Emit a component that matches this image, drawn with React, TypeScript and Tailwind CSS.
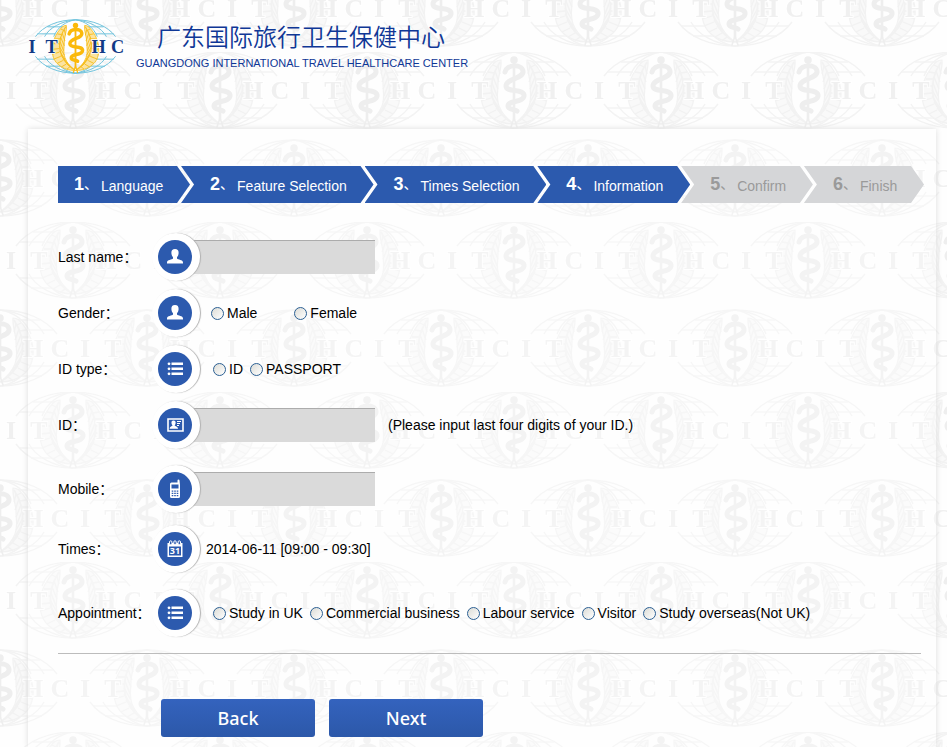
import clsx from 'clsx';
import React, { useState } from 'react';

interface EmblemProps {
    line: string,
    wreath: string,
    fill: string,
    snake: string,
    letter: string,
}

interface Step {
    number: number,
    label: string,
    done: boolean,
}

interface Choice {
    value: string,
    label: string,
}

interface RowProps {
    label: string,
    htmlFor?: string,
    icon: React.ReactNode,
    className?: string,
    children: React.ReactNode,
}

const steps: Step[] = [
    { number: 1, label: 'Language', done: true },
    { number: 2, label: 'Feature Selection', done: true },
    { number: 3, label: 'Times Selection', done: true },
    { number: 4, label: 'Information', done: true },
    { number: 5, label: 'Confirm', done: false },
    { number: 6, label: 'Finish', done: false },
];

const genders: Choice[] = [
    { value: 'male', label: 'Male' },
    { value: 'female', label: 'Female' },
];

const idTypes: Choice[] = [
    { value: 'id', label: 'ID' },
    { value: 'passport', label: 'PASSPORT' },
];

const appointments: Choice[] = [
    { value: 'study-uk', label: 'Study in UK' },
    { value: 'business', label: 'Commercial business' },
    { value: 'labour', label: 'Labour service' },
    { value: 'visitor', label: 'Visitor' },
    { value: 'study-other', label: 'Study overseas(Not UK)' },
];

// Globe, wreath and staff, centred on 0,0 and 136 x 78 units large
function Emblem({ line, wreath, fill, snake, letter }: EmblemProps) {
    return (
        <g>
            <g fill="none" stroke={line} strokeWidth="1.4">
                <path d="M-57 -14C-46 -29 -25 -38 0 -38S46 -29 57 -14M-57 14C-46 29 -25 38 0 38S46 29 57 14" />
                <path d="M-44 -14C-37 -27 -20 -36 0 -38C20 -36 37 -27 44 -14M-44 14C-37 27 -20 36 0 38C20 36 37 27 44 14" />
                <path d="M-31 -14C-26 -27 -14 -36 0 -38C14 -36 26 -27 31 -14M-31 14C-26 27 -14 36 0 38C14 36 26 27 31 14" />
                <path d="M-54 -18H-28M28 -18H54M-40 -28H-16M16 -28H40M-54 18H-28M28 18H54M-42 28H-12M12 28H42" />
            </g>
            {[1, -1].map((side) => (
                <g key={side} transform={`scale(${side} 1)`} stroke={wreath} fill="none">
                    <path
                        d="M13 -30C18 -30 20 -27 24 -22C30 -14 34 -3 33 8C32 16 30 21 24 26C17 32 9 34 0 34C7 29 12 24 15 16C18 8 16 2 16 -6C16 -14 12 -22 13 -30Z"
                        fill={fill}
                        strokeWidth="1.2"
                    />
                    <path d="M14 -28C27 -8 27 16 2 33" strokeWidth="1.5" />
                    <path
                        d="M16 -24L14 -16M19 -19L15 -8M21 -13L16 -1M22 -7L17 6M23 0L16 12M23 6L15 18M21 12L12 23M18 18L8 28M14 23L5 31"
                        strokeWidth="1.3"
                    />
                    <path
                        d="M17 -23L21 -25M20 -17L26 -18M22 -11L29 -11M23 -4L32 -4M23 3L33 4M23 8L33 11M21 14L31 18M18 20L26 24M13 25L20 29M8 29L12 32"
                        strokeWidth="1.3"
                    />
                </g>
            ))}
            <g fill="none" stroke={snake} strokeLinecap="round">
                <circle cx="0" cy="-30" r="3.8" fill={snake} stroke="none" />
                <path d="M0 -29V30" strokeWidth="2.6" />
                <path d="M-3 37L0 28L3 37" strokeWidth="1.6" />
                <path
                    d="M-9 -18C-7 -26 8 -26 9 -19C10 -11 -8 -12 -8 -4C-8 3 11 -2 10 6C9 13 -6 10 -6 16C-6 20 0 19 3 21"
                    strokeWidth="5"
                />
            </g>
            <g
                fill={letter}
                stroke="#fff"
                strokeWidth="2"
                paintOrder="stroke"
                textAnchor="middle"
                fontSize="26"
                fontWeight="bold"
                fontFamily="'Liberation Serif', serif"
            >
                <text x="-62" y="9">I</text>
                <text x="-34" y="9">T</text>
                <text x="33" y="9">H</text>
                <text x="60" y="9">C</text>
            </g>
        </g>
    );
}

function Watermark() {
    const pale = { line: '#f3f3f3', wreath: '#f2f2f2', fill: '#f9f9f9', snake: '#eeeeee', letter: '#f0f0f0' };
    return (
        <svg className="absolute inset-0 -z-10 h-full w-full" aria-hidden="true">
            <defs>
                <pattern id="watermark" width="147" height="170" y="52" patternUnits="userSpaceOnUse">
                    <g transform="translate(73 38)"><Emblem {...pale} /></g>
                    <g transform="translate(0 126)"><Emblem {...pale} /></g>
                    <g transform="translate(147 126)"><Emblem {...pale} /></g>
                </pattern>
            </defs>
            <rect width="100%" height="100%" fill="url(#watermark)" />
        </svg>
    );
}

function PersonIcon() {
    return (
        <svg viewBox="0 0 18 18" className="size-[18px]" fill="#fff" aria-hidden="true">
            <path d="M9 1C11.600 1 12.800 2.600 12.600 5.200C12.500 7.200 11.700 8.400 11 9.200V10.500C11.800 11.800 17 11.600 17 14.500V15.500H1V14.500C1 11.600 6.200 11.800 7 10.500V9.200C6.300 8.400 5.500 7.200 5.400 5.200C5.200 2.600 6.400 1 9 1Z" />
        </svg>
    );
}

function ListIcon() {
    return (
        <svg viewBox="0 0 18 18" className="size-[18px]" fill="#fff" aria-hidden="true">
            <path d="M5.500 2.500h11.500v2.600h-11.500zM5.500 7.500h11.500v2.600h-11.500zM5.500 12.500h11.500v2.600h-11.500z" />
            <circle cx="3" cy="3.800" r="1.400" />
            <circle cx="3" cy="8.800" r="1.400" />
            <circle cx="3" cy="13.800" r="1.400" />
        </svg>
    );
}

function CardIcon() {
    return (
        <svg viewBox="0 0 18 18" className="size-[18px]" aria-hidden="true">
            <path d="M2 3H17V15H2Z" fill="none" stroke="#fff" strokeWidth="1.600" />
            <path d="M7.500 4.600C9.200 4.600 9.800 5.700 9.600 7.200C9.500 8.200 9 8.800 8.700 9.300C9 10.500 12 10.400 12 12.700H3.700C3.700 10.400 6.200 10.500 6.500 9.300C6 8.800 5.600 8.200 5.500 7.200C5.300 5.700 5.900 4.600 7.500 4.600Z" fill="#fff" />
            <path d="M11 5.500h4M11 7.500h3M11 9.500h2" stroke="#fff" strokeWidth="1" />
        </svg>
    );
}

function PhoneIcon() {
    return (
        <svg viewBox="0 0 18 20" className="h-5 w-[18px]" aria-hidden="true">
            <path d="M11.500 1.500Q11.500 0.500 12.500 0.500T13.500 1.500L14 6V17.500Q14 19 12.500 19H5.500Q4 19 4 17.500V5Q4 3.500 5.500 3.500H11.500Z" fill="#fff" />
            <path d="M5.500 5.500h7v4h-7zM5.700 11.500h1.600v1.200h-1.600zM8.200 11.500h1.600v1.200h-1.600zM10.700 11.500h1.600v1.200h-1.600zM5.700 13.800h1.600v1.200h-1.600zM8.200 13.800h1.600v1.200h-1.600zM10.700 13.800h1.600v1.200h-1.600zM5.700 16.100h1.600v1.200h-1.600zM8.200 16.100h1.600v1.200h-1.600zM10.700 16.100h1.600v1.200h-1.600z" fill="#2c5aae" />
        </svg>
    );
}

function CalendarIcon() {
    return (
        <svg viewBox="0 0 18 18" className="size-[18px]" aria-hidden="true">
            <path d="M1.500 3H16.500V17H1.500Z" fill="#fff" />
            <path d="M3 6.500H15V15.500H3Z" fill="#2c5aae" />
            <g fill="#2c5aae" stroke="#fff" strokeWidth="1">
                <rect x="3.500" y="0.800" width="2.400" height="4" rx="1.200" />
                <rect x="7.800" y="0.800" width="2.400" height="4" rx="1.200" />
                <rect x="12.100" y="0.800" width="2.400" height="4" rx="1.200" />
            </g>
            <text x="9" y="14" fontSize="9" fontWeight="bold" fill="#fff" textAnchor="middle" fontFamily="'Open Sans', sans-serif">31</text>
        </svg>
    );
}

function Row({ label, htmlFor, icon, className, children }: RowProps) {
    const Label = htmlFor ? 'label' : 'span';
    return (
        <div className={clsx('flex h-12 items-center', className)}>
            <Label htmlFor={htmlFor} className="w-[94px] shrink-0 whitespace-nowrap">
                {label}：
            </Label>
            <span className="z-10 flex size-12 shrink-0 items-center justify-center rounded-full bg-white pr-[2px] shadow-[1px_0_1px_#b0b0b0]">
                <span className="flex size-[34px] items-center justify-center rounded-full bg-[#2c5aae]">
                    {icon}
                </span>
            </span>
            {children}
        </div>
    );
}

function TextField({ id }: { id: string }) {
    return (
        <input
            id={id}
            type="text"
            className="-ml-3 h-[34px] w-[187px] border-t border-[#acacac] bg-[#dadada] pr-2 pl-4 outline-none"
        />
    );
}

function Choices({ name, title, options, className }: { name: string, title: string, options: Choice[], className: string }) {
    return (
        <div role="radiogroup" aria-label={title} className={clsx('flex flex-wrap items-center', className)}>
            {options.map((option) => (
                <label key={option.value} className="flex items-center gap-[3px] whitespace-nowrap">
                    <input
                        type="radio"
                        name={name}
                        value={option.value}
                        className="size-[13px] appearance-none rounded-full border border-[#2b5f93] bg-linear-to-br from-[#dcdcd6] to-white checked:border-4"
                    />
                    {option.label}
                </label>
            ))}
        </div>
    );
}

export default function App() {
    const [time] = useState('2014-06-11 [09:00 - 09:30]');

    return (
        <div className="relative isolate flex min-h-screen flex-col bg-[#fefefe] font-['Liberation_Sans','Noto_Sans_CJK_SC',sans-serif] text-[14px] text-black">
            <Watermark />

            <header className="flex h-[129px] items-start gap-3 pt-[19px] pl-[27px]">
                <svg viewBox="-69 -39 138 78" className="h-[55px] w-[97px] shrink-0" role="img" aria-label="ITHC">
                    <Emblem line="#6fc3dc" wreath="#f6bd1c" fill="#fbe3a0" snake="#fbb90a" letter="#123a86" />
                </svg>
                <div className="text-[#0f3796]">
                    <h1 className="pl-[21px] font-['Noto_Sans_CJK_SC',sans-serif] text-[24px] leading-[34px] font-[350]">广东国际旅行卫生保健中心</h1>
                    <p className="pt-[2px] text-[11px] leading-4">GUANGDONG INTERNATIONAL TRAVEL HEALTHCARE CENTER</p>
                </div>
            </header>

            <main className="mr-[11px] ml-7 flex-1 bg-white/30 pt-[37px] pr-3 pb-[10px] pl-[30px] shadow-[0_0_6px_#dedede]">
                <ol className="flex h-[37px]">
                    {steps.map((step, index) => (
                        <li
                            key={step.number}
                            className={clsx(
                                'flex flex-auto items-center whitespace-nowrap pr-6',
                                index === 0
                                    ? 'pl-4 [clip-path:polygon(0_0,calc(100%-13px)_0,100%_50%,calc(100%-13px)_100%,0_100%)]'
                                    : '-ml-[9px] pl-[29px] [clip-path:polygon(0_0,calc(100%-13px)_0,100%_50%,calc(100%-13px)_100%,0_100%,13px_50%)]',
                                step.done ? 'bg-[#2c5aae] text-white' : 'bg-[#d5d6d8] text-[#9a9a9a]',
                            )}
                        >
                            <b className="text-[18px]">{step.number}</b>
                            <span className="w-[17px]">、</span>
                            <span className="pt-1">{step.label}</span>
                        </li>
                    ))}
                </ol>

                <form className="pt-[30px]" onSubmit={(e) => e.preventDefault()}>
                    <Row label="Last name" htmlFor="last-name" icon={<PersonIcon />}>
                        <TextField id="last-name" />
                    </Row>
                    <Row label="Gender" icon={<PersonIcon />} className="mt-2">
                        <Choices name="gender" title="Gender" options={genders} className="ml-[11px] gap-x-[37px]" />
                    </Row>
                    <Row label="ID type" icon={<ListIcon />} className="mt-2">
                        <Choices name="id-type" title="ID type" options={idTypes} className="ml-[13px] gap-x-[7px]" />
                    </Row>
                    <Row label="ID" htmlFor="id-number" icon={<CardIcon />} className="mt-2">
                        <TextField id="id-number" />
                        <span className="ml-[13px]">(Please input last four digits of your ID.)</span>
                    </Row>
                    <Row label="Mobile" htmlFor="mobile" icon={<PhoneIcon />} className="mt-4">
                        <TextField id="mobile" />
                    </Row>
                    <Row label="Times" icon={<CalendarIcon />} className="mt-3">
                        <span className="ml-[6px]">{time}</span>
                    </Row>
                    <Row label="Appointment" icon={<ListIcon />} className="mt-4">
                        <Choices name="appointment" title="Appointment" options={appointments} className="ml-[13px] gap-x-[7px]" />
                    </Row>

                    <hr className="mt-4 mr-[3px] border-[#bcbcbc]" />

                    <div className="mt-[45px] ml-[103px] flex gap-[14px] font-['Noto_Sans',sans-serif] text-[18px] font-medium text-white">
                        <button type="button" className="h-[38px] w-[154px] rounded-[3px] bg-linear-to-b from-[#3463be] to-[#2c58a9]">Back</button>
                        <button type="submit" className="h-[38px] w-[154px] rounded-[3px] bg-linear-to-b from-[#3463be] to-[#2c58a9]">Next</button>
                    </div>
                </form>
            </main>
        </div>
    );
}
